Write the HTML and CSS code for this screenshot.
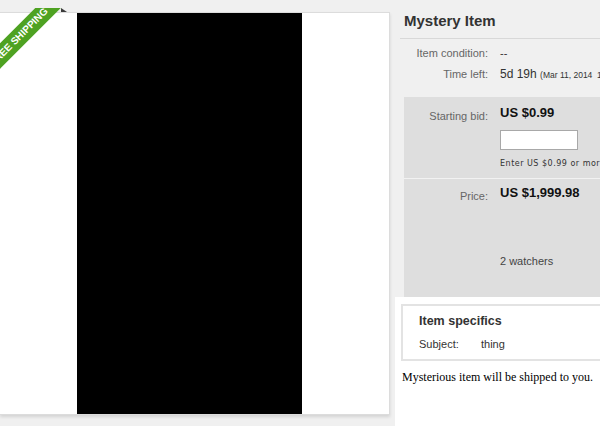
FILE: index.html
```html
<!DOCTYPE html>
<html>
<head>
<meta charset="utf-8">
<link rel="stylesheet" href="styles.css">
</head>
<body>
<div class="page">
  <div class="gallery">
    <div class="photo"></div>
    <div class="ribbon-wrap"><div class="ribbon">FREE SHIPPING</div></div>
    <div class="fold"></div>
  </div>
  <div class="info">
    <h1 class="title">Mystery Item</h1>
    <div class="meta">
      <div class="lbl">Item condition:</div><div class="val dash">--</div>
      <div class="lbl">Time left:</div><div class="val time">5d 19h <span class="date">(Mar 11, 2014&nbsp;&nbsp;10:52:31 PST)</span></div>
    </div>
    <div class="buybox">
      <div class="bid">
        <div class="lbl2">Starting bid:</div>
        <div class="bidcol">
          <div class="price">US $0.99</div>
          <div class="input"></div>
          <div class="hint">Enter US $0.99 or more</div>
        </div>
      </div>
      <div class="bin">
        <div class="lbl2">Price:</div>
        <div class="bidcol">
          <div class="price">US $1,999.98</div>
          <div class="watchers">2 watchers</div>
        </div>
      </div>
    </div>
    <div class="desc">
      <div class="specs">
        <h2 class="specs-title">Item specifics</h2>
        <div class="specs-row"><span class="specs-lbl">Subject:</span><span>thing</span></div>
      </div>
      <p class="desc-text">Mysterious item will be shipped to you.</p>
    </div>
  </div>
</div>
</body>
</html>
```
FILE: styles.css
```css
html, body {
  margin: 0;
  padding: 0;
}
body {
  width: 600px;
  height: 426px;
  overflow: hidden;
  background: #f0f0f0;
  font-family: "Liberation Sans", Arial, sans-serif;
}
.page {
  display: flex;
  align-items: flex-start;
}
.gallery {
  position: relative;
  flex: none;
  margin-top: 12px;
  width: 390px;
  height: 403px;
  box-sizing: border-box;
  background: #fff;
  border: 1px solid #dcdcdc;
  border-left: none;
  padding-left: 77px;
  box-shadow: 0 2px 3px rgba(0, 0, 0, 0.12);
}
.photo {
  width: 225px;
  height: 100%;
  background: #000;
}
.ribbon-wrap {
  position: absolute;
  left: 0;
  top: -5px;
  width: 80px;
  height: 80px;
  overflow: hidden;
}
.ribbon {
  position: absolute;
  left: -51px;
  top: 20px;
  width: 140px;
  height: 18px;
  line-height: 18px;
  background: #4ea222;
  color: #fff;
  font-size: 10px;
  font-weight: bold;
  text-align: center;
  transform: rotate(-45deg);
}
.fold {
  position: absolute;
  left: 61px;
  top: -5px;
  width: 6px;
  height: 4px;
  background: #3a3a3a;
  clip-path: polygon(0 0, 100% 100%, 0 100%);
}
.info {
  flex: none;
  width: 210px;
  overflow: hidden;
}
.title {
  margin: 0 0 0 10px;
  padding: 12px 0 8px 4px;
  border-bottom: 1px solid #d8d8d8;
  font-size: 15px;
  line-height: 18px;
  font-weight: bold;
  color: #333;
}
.meta {
  display: grid;
  grid-template-columns: 98px 1fr;
  column-gap: 12px;
  padding: 4px 0 11px;
  line-height: 21px;
  font-size: 11px;
  color: #666;
}
.lbl {
  text-align: right;
}
.val {
  color: #333;
  white-space: nowrap;
}
.time {
  font-size: 12px;
}
.date {
  font-size: 8.5px;
}
.buybox {
  margin-left: 14px;
  height: 200px;
  background: #dedede;
  display: flex;
  flex-direction: column;
}
.bid, .bin {
  display: grid;
  grid-template-columns: 84px 1fr;
  column-gap: 12px;
}
.bid {
  padding: 8px 0 8px;
}
.bin {
  flex: 1;
  padding-top: 6px;
  border-top: 1px solid #f2f2f2;
}
.lbl2 {
  text-align: right;
  font-size: 11px;
  line-height: 16px;
  padding-top: 3px;
  color: #666;
}
.price {
  font-size: 13px;
  line-height: 16px;
  font-weight: bold;
  color: #111;
}
.input {
  margin-top: 9px;
  width: 78px;
  height: 20px;
  box-sizing: border-box;
  background: #fff;
  border: 1px solid #a8a8a8;
}
.hint {
  margin-top: 8px;
  font-family: "DejaVu Sans", Verdana, sans-serif;
  font-size: 8px;
  letter-spacing: 0.5px;
  line-height: 12px;
  color: #333;
  white-space: nowrap;
}
.watchers {
  margin-top: 52px;
  font-size: 11px;
  line-height: 16px;
  color: #444;
}
.desc {
  margin-left: 5px;
  height: 130px;
  background: #fff;
  padding: 7px 0 0 6px;
}
.specs {
  width: 220px;
  border: 2px solid #e3e3e3;
  padding: 7px 0 7px 16px;
}
.specs-title {
  margin: 0 0 7px;
  font-size: 12.5px;
  line-height: 16px;
  font-weight: bold;
  color: #333;
}
.specs-row {
  display: flex;
  font-size: 11px;
  line-height: 16px;
  color: #333;
}
.specs-lbl {
  width: 62px;
}
.desc-text {
  margin: 9px 0 0 1px;
  font-family: "Liberation Serif", "Times New Roman", serif;
  font-size: 12px;
  line-height: 15px;
  color: #000;
}
```
